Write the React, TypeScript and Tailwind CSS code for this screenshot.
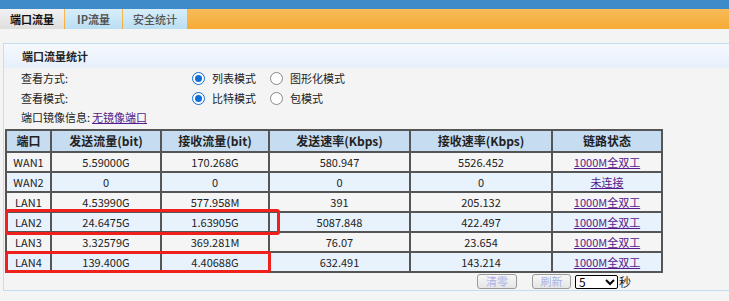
import React from "react";

type Row = {
  port: string;
  tx: string;
  rx: string;
  txRate: string;
  rxRate: string;
  link: string;
};

const rows: Row[] = [
  { port: "WAN1", tx: "5.59000G", rx: "170.268G", txRate: "580.947", rxRate: "5526.452", link: "1000M全双工" },
  { port: "WAN2", tx: "0", rx: "0", txRate: "0", rxRate: "0", link: "未连接" },
  { port: "LAN1", tx: "4.53990G", rx: "577.958M", txRate: "391", rxRate: "205.132", link: "1000M全双工" },
  { port: "LAN2", tx: "24.6475G", rx: "1.63905G", txRate: "5087.848", rxRate: "422.497", link: "1000M全双工" },
  { port: "LAN3", tx: "3.32579G", rx: "369.281M", txRate: "76.07", rxRate: "23.654", link: "1000M全双工" },
  { port: "LAN4", tx: "139.400G", rx: "4.40688G", txRate: "632.491", rxRate: "143.214", link: "1000M全双工" },
];

const cell = "border border-[#555] text-center p-0 leading-none";

const Radio = ({ checked, label }: { checked: boolean; label: string }) => (
  <label className="flex items-center">
    <span
      className={`w-[13px] h-[13px] rounded-full border flex items-center justify-center bg-white ${
        checked ? "border-[#0f6fd8]" : "border-[#888]"
      }`}
    >
      {checked && <span className="w-[7px] h-[7px] rounded-full bg-[#0f6fd8]" />}
    </span>
    <span className="ml-[7px]">{label}</span>
  </label>
);

const App: React.FC = () => {
  return (
    <div className="w-[729px] h-[301px] bg-[#f4f4f4] text-[11px] text-[#222] font-['Noto_Sans_CJK_SC',sans-serif] overflow-hidden">
      {/* top bars */}
      <div className="h-[9px] bg-[#3f8bca]" />
      <div className="h-[20px] flex bg-gradient-to-b from-[#f8bb57] to-[#f6ab36]">
        <div className="w-[64px] flex items-center justify-center font-bold text-[11px] text-[#111] bg-gradient-to-b from-[#f2f2f2] to-[#dedede]">
          端口流量
        </div>
        <div className="w-[57px] ml-[1px] flex items-center justify-center font-bold text-[11px] text-[#555] bg-gradient-to-b from-[#d8eef9] to-[#b9def2]">
          IP流量
        </div>
        <div className="w-[64px] ml-[1px] flex items-center justify-center font-medium text-[11px] text-[#555] bg-gradient-to-b from-[#d8eef9] to-[#b9def2]">
          安全统计
        </div>
      </div>

      {/* panel */}
      <div className="mt-[14px] ml-[3px] border border-r-0 border-[#c3def2] h-[248px]">
        <div className="h-[24px] flex items-center pl-[18px] font-bold bg-gradient-to-b from-[#f6f9fe] to-[#e6f0fb]">
          端口流量统计
        </div>
        <div className="h-[21px] flex items-center pl-[17px]">
          <span className="w-[171px]">查看方式:</span>
          <div className="w-[78px]">
            <Radio checked label="列表模式" />
          </div>
          <Radio checked={false} label="图形化模式" />
        </div>
        <div className="h-[19px] flex items-center pl-[17px]">
          <span className="w-[171px]">查看模式:</span>
          <div className="w-[78px]">
            <Radio checked label="比特模式" />
          </div>
          <Radio checked={false} label="包模式" />
        </div>
        <div className="h-[18px] flex items-center pl-[17px]">
          端口镜像信息:
          <a className="ml-[2px] text-[#551a8b] underline">无镜像端口</a>
        </div>

        <div className="relative ml-[1px] mt-[3px] w-[656px]">
          <table className="w-[656px] border border-[#555] border-separate border-spacing-0 table-fixed">
            <colgroup>
              <col className="w-[45px]" />
              <col className="w-[110px]" />
              <col className="w-[108px]" />
              <col className="w-[141px]" />
              <col className="w-[142px]" />
              <col className="w-[110px]" />
            </colgroup>
            <thead>
              <tr className="h-[22px] bg-[#c6dcf0] font-bold text-[12px]">
                <th className={cell}>端口</th>
                <th className={cell}>发送流量(bit)</th>
                <th className={cell}>接收流量(bit)</th>
                <th className={cell}>发送速率(Kbps)</th>
                <th className={cell}>接收速率(Kbps)</th>
                <th className={cell}>链路状态</th>
              </tr>
            </thead>
            <tbody>
              {rows.map((r, i) => (
                <tr key={r.port} className={`h-[20px] ${i % 2 ? "bg-[#e8f2fc]" : "bg-[#f5f5f5]"}`}>
                  <td className={cell}>{r.port}</td>
                  <td className={cell}>{r.tx}</td>
                  <td className={cell}>{r.rx}</td>
                  <td className={cell}>{r.txRate}</td>
                  <td className={cell}>{r.rxRate}</td>
                  <td className={cell}>
                    <a className="text-[#551a8b] underline">{r.link}</a>
                  </td>
                </tr>
              ))}
            </tbody>
          </table>
          {/* red annotation boxes */}
          <div className="absolute left-0 top-[80px] w-[275px] h-[26px] border-[3px] border-[#f0201c] rounded-[3px]" />
          <div className="absolute left-0 top-[122px] w-[266px] h-[22px] border-[3px] border-[#f0201c] rounded-[3px]" />
        </div>

        <div className="flex items-center mt-[1px] pl-[473px] h-[15px]">
          <button className="w-[40px] h-[15px] border border-[#9a9a9a] rounded-[3px] bg-gradient-to-b from-[#f7f7f7] to-[#e6e6e6] text-[#a9b2e6] leading-none">
            清零
          </button>
          <button className="ml-[15px] w-[39px] h-[15px] border border-[#9a9a9a] rounded-[3px] bg-gradient-to-b from-[#f7f7f7] to-[#e6e6e6] text-[#a9b2e6] leading-none">
            刷新
          </button>
          <div className="ml-[4px] w-[43px] h-[14px] border border-black rounded-[2px] bg-white flex items-center justify-between pl-[3px] pr-[2px] text-black text-[12px] leading-none">
            <span>5</span>
            <svg width="10" height="8" viewBox="0 0 10 8">
              <path d="M1 2 L5 6 L9 2" fill="none" stroke="#000" strokeWidth="2" />
            </svg>
          </div>
          <span className="ml-[1px] text-[12px]">秒</span>
        </div>
      </div>
    </div>
  );
};

export default App;
